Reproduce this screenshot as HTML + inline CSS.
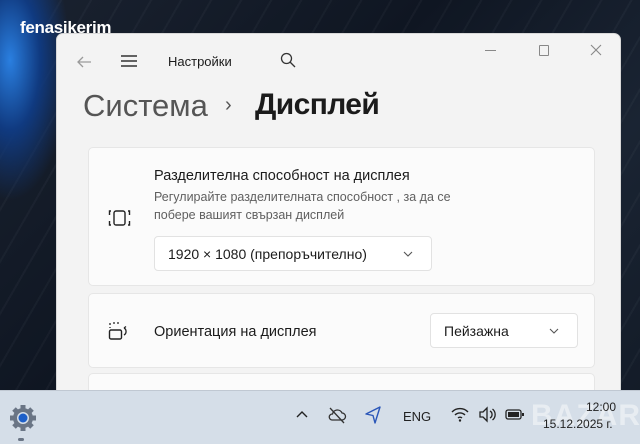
<!DOCTYPE html>
<html><head><meta charset="utf-8"><style>
*{margin:0;padding:0;box-sizing:border-box}
body{width:640px;height:444px;overflow:hidden;position:relative;font-family:"Liberation Sans","DejaVu Sans",sans-serif;
background:radial-gradient(ellipse 60px 140px at 10px 60px,#2a7fe0 0%,#103a80 50%,transparent 100%),repeating-linear-gradient(120deg,rgba(255,255,255,0.03) 0 2px,transparent 2px 26px),linear-gradient(135deg,#1a2230 0%,#0f1622 40%,#1a2433 70%,#121a26 100%);}
.wm{position:absolute;left:20px;top:18px;color:#fff;font-weight:bold;font-size:17px;letter-spacing:-0.3px}
.win{position:absolute;left:56px;top:33px;width:565px;height:360px;background:#f3f3f3;border-radius:7px 7px 0 0;border:1px solid #d8d8d8}
.t{position:absolute;color:#1b1b1b}
.card{position:absolute;left:31px;width:507px;background:#fbfbfb;border:1px solid #e6e6e6;border-radius:5px}
.dd{position:absolute;background:#fff;border:1px solid #e2e2e2;border-radius:4px;font-size:14px;color:#1b1b1b}
.tb{position:absolute;left:0;top:390px;width:640px;height:54px;background:#d5dee8;border-top:1px solid #c0c8d2}
</style></head><body>
<div class="wm">fenasikerim</div>
<div class="win">
 <svg class="t" style="left:18px;top:20px" width="18" height="16" viewBox="0 0 18 16"><path d="M16 8H3M8 3L3 8l5 5" fill="none" stroke="#9a9a9a" stroke-width="1.3"/></svg>
 <svg class="t" style="left:63px;top:20px" width="18" height="14"><path d="M1 2h16M1 7h16M1 12h16" stroke="#333" stroke-width="1.4"/></svg>
 <div class="t" style="left:111px;top:20px;font-size:13px">Настройки</div>
 <svg class="t" style="left:223px;top:18px" width="16" height="16"><circle cx="6.5" cy="6.5" r="5" fill="none" stroke="#333" stroke-width="1.3"/><path d="M10 10l5 5" stroke="#333" stroke-width="1.3"/></svg>
 <div class="t" style="left:428px;top:16px;width:11px;border-top:1px solid #888"></div>
 <div class="t" style="left:482px;top:11px;width:10px;height:11px;border:1px solid #888;border-radius:1px"></div>
 <svg class="t" style="left:533px;top:10px" width="12" height="12"><path d="M1 1l10 10M11 1L1 11" stroke="#888" stroke-width="1.1"/></svg>
 <div class="t" style="left:26px;top:54px;font-size:31px;color:#555">Система</div>
 <div class="t" style="left:168px;top:60px;font-size:20px;color:#555">›</div>
 <div class="t" style="left:198px;top:54px;font-size:30px;font-weight:bold;letter-spacing:-0.6px;color:#1b1b1b">Дисплей</div>
 <div class="card" style="top:113px;height:139px">
  <svg style="position:absolute;left:18px;top:60px" width="25" height="20" viewBox="0 0 25 20"><rect x="7" y="3" width="11" height="14" rx="2" fill="none" stroke="#222" stroke-width="1.4"/><path d="M4 3H2.5v4M4 17H2.5v-4M21 3h1.5v4M21 17h1.5v-4" fill="none" stroke="#222" stroke-width="1.4"/></svg>
  <div class="t" style="left:65px;top:20px;font-size:14.5px">Разделителна способност на дисплея</div>
  <div class="t" style="left:65px;top:40px;font-size:12.5px;color:#5f5f5f;line-height:18px">Регулирайте разделителната способност , за да се<br>побере вашият свързан дисплей</div>
  <div class="dd" style="left:65px;top:88px;width:278px;height:35px;padding:9px 0 0 13px">1920 × 1080 (препоръчително)<svg style="position:absolute;right:18px;top:14px" width="10" height="6"><path d="M1 1l4 4 4-4" fill="none" stroke="#555" stroke-width="1.1"/></svg></div>
 </div>
 <div class="card" style="top:259px;height:75px">
  <svg style="position:absolute;left:18px;top:27px" width="24" height="22" viewBox="0 0 24 22"><path d="M3 2v2M3 6v1M6 2h2M10 2h2" stroke="#222" stroke-width="1.3"/><rect x="2.5" y="9" width="12" height="9" rx="1.5" fill="none" stroke="#222" stroke-width="1.4"/><path d="M17 7a4 4 0 0 1 0 7M17 7l2-1.5" fill="none" stroke="#222" stroke-width="1.3"/></svg>
  <div class="t" style="left:65px;top:30px;font-size:14.5px">Ориентация на дисплея</div>
  <div class="dd" style="left:341px;top:19px;width:148px;height:35px;padding:9px 0 0 13px">Пейзажна<svg style="position:absolute;right:18px;top:14px" width="10" height="6"><path d="M1 1l4 4 4-4" fill="none" stroke="#555" stroke-width="1.1"/></svg></div>
 </div>
 <div class="card" style="top:339px;height:30px"></div>
</div>
<div class="tb">
 <svg style="position:absolute;left:7px;top:11px" width="32" height="32" viewBox="0 0 32 32"><g fill="#6a7585"><circle cx="16" cy="16" r="10"/><g stroke="#6a7585" stroke-width="5"><path d="M16 3v26M3 16h26M7 7l18 18M25 7L7 25"/></g></g><circle cx="16" cy="16" r="6" fill="#d5dee8"/><circle cx="16" cy="16" r="4.5" fill="#1d5fc8"/></svg>
 <div style="position:absolute;left:18px;top:47px;width:6px;height:3px;border-radius:2px;background:#6a7585"></div>
 <svg style="position:absolute;left:295px;top:18px" width="14" height="10"><path d="M2 8l5-5 5 5" fill="none" stroke="#222" stroke-width="1.4"/></svg>
 <svg style="position:absolute;left:327px;top:15px" width="20" height="18"><path d="M5 14h10a3.5 3.5 0 0 0 0-7 5 5 0 0 0-9.5 1A3 3 0 0 0 5 14z" fill="none" stroke="#333" stroke-width="1.3"/><path d="M3 2l14 15" stroke="#333" stroke-width="1.3"/></svg>
 <svg style="position:absolute;left:364px;top:14px" width="18" height="20"><path d="M16 2L2 9l7 1.5L11 18z" fill="none" stroke="#2a56b8" stroke-width="1.4" stroke-linejoin="round"/></svg>
 <div style="position:absolute;left:403px;top:18px;font-size:13px;color:#222">ENG</div>
 <svg style="position:absolute;left:451px;top:16px" width="18" height="15"><path d="M1 5a11 11 0 0 1 16 0M4 8a7 7 0 0 1 10 0M7 11a3 3 0 0 1 4 0" fill="none" stroke="#222" stroke-width="1.4"/><circle cx="9" cy="13.5" r="1.2" fill="#222"/></svg>
 <svg style="position:absolute;left:478px;top:15px" width="20" height="17"><path d="M2 6h3l4-4v13l-4-4H2z" fill="none" stroke="#222" stroke-width="1.3"/><path d="M12 5a4 4 0 0 1 0 7M14.5 3a7 7 0 0 1 0 11" fill="none" stroke="#222" stroke-width="1.3"/></svg>
 <svg style="position:absolute;left:505px;top:18px" width="20" height="11"><rect x="1" y="1" width="15" height="9" rx="2" fill="none" stroke="#222" stroke-width="1.3"/><rect x="3" y="3" width="11" height="5" fill="#222"/><rect x="17" y="4" width="2" height="3" fill="#222"/></svg>
 <div style="position:absolute;left:531px;top:8px;font-size:30px;font-weight:bold;color:rgba(255,255,255,0.45);letter-spacing:1px">BAZAR</div>
 <div style="position:absolute;left:586px;top:9px;font-size:12px;color:#222">12:00</div>
 <div style="position:absolute;left:543px;top:26px;font-size:12px;color:#222">15.12.2025 г.</div>
</div>
</body></html>
